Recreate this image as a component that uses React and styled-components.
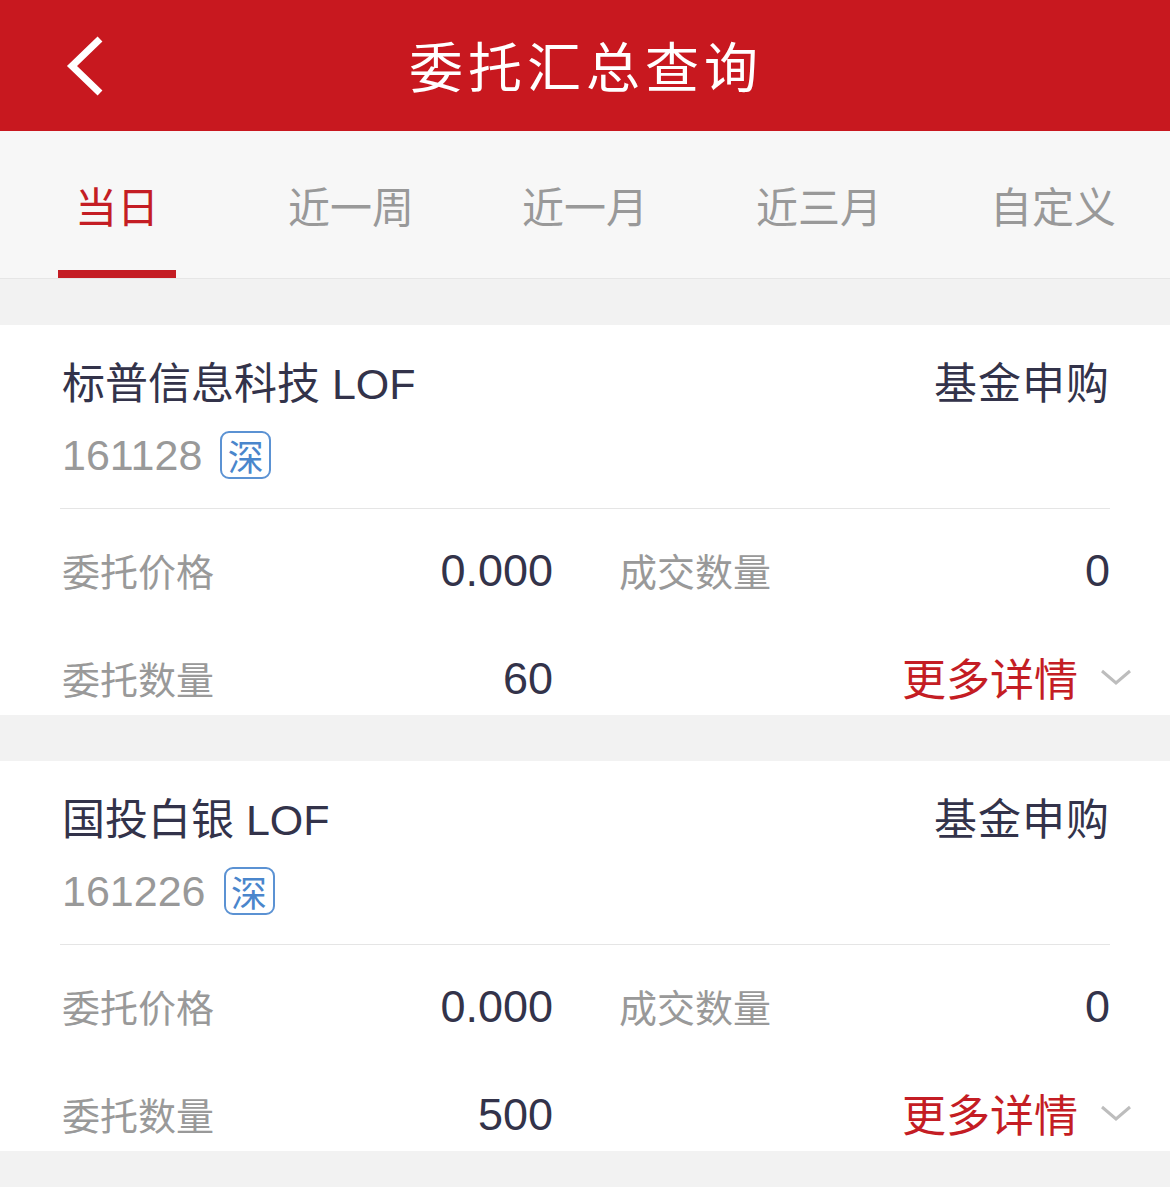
import React from 'react'
import styled, { createGlobalStyle } from 'styled-components'

const GlobalStyle = createGlobalStyle`
  html, body {
    margin: 0;
    padding: 0;
    background: #f2f2f2;
    font-family: "Liberation Sans", "Noto Sans CJK SC", sans-serif;
  }
`

const Page = styled.div`
  width: 1170px;
  min-height: 1187px;
  background: #f2f2f2;
`

const Header = styled.div`
  height: 131px;
  background: #c8181f;
  display: flex;
  align-items: center;
  justify-content: center;
  position: relative;
`

const Back = styled.div`
  position: absolute;
  left: 62px;
  top: 34px;
  width: 48px;
  height: 64px;
`

const HeaderTitle = styled.div`
  color: #fff;
  font-size: 54px;
  letter-spacing: 5px;
  font-family: "Noto Sans CJK SC", sans-serif;
  margin-left: 2px;
  margin-top: -2px;
`

const Tabs = styled.div`
  height: 147px;
  background: #f7f7f7;
  border-bottom: 1px solid #e6e6e6;
  display: grid;
  grid-template-columns: repeat(5, 1fr);
`

const Tab = styled.div`
  position: relative;
  display: flex;
  align-items: center;
  justify-content: center;
  font-family: "Noto Sans CJK SC", sans-serif;
  font-size: 42px;
  color: ${p => (p.$active ? '#c41d24' : '#999')};

  &::after {
    content: '';
    display: ${p => (p.$active ? 'block' : 'none')};
    position: absolute;
    left: 58px;
    bottom: 0;
    width: 118px;
    height: 8px;
    background: #c41d24;
  }
`

const List = styled.div`
  padding-top: 46px;
  display: flex;
  flex-direction: column;
  gap: 46px;
`

const Card = styled.div`
  background: #fff;
  padding: 0 60px;
`

const Head = styled.div`
  padding: 26px 0 29px;
  border-bottom: 1px solid #e5e5e5;
`

const TitleRow = styled.div`
  height: 58px;
  display: flex;
  align-items: center;
  justify-content: space-between;
  color: #33334a;
  font-size: 43px;
`

const Name = styled.div`
  padding-left: 2px;
`

const Kind = styled.div`
  letter-spacing: 1px;
  font-size: 43px;
`

const CodeRow = styled.div`
  margin-top: 22px;
  height: 48px;
  display: flex;
  align-items: center;
  gap: 18px;
  padding-left: 2px;
  color: #999;
  font-size: 43px;
`

const Badge = styled.span`
  box-sizing: border-box;
  width: 51px;
  height: 48px;
  border: 2.5px solid #5b92d3;
  border-radius: 9px;
  color: #4a86cc;
  font-size: 36px;
  display: flex;
  align-items: center;
  justify-content: center;
  font-family: "Noto Sans CJK SC", sans-serif;
`

const Body = styled.div`
  padding: 24px 0 2px;
  display: grid;
  grid-template-columns: 1fr 1fr;
  column-gap: 64px;
  row-gap: 36px;
`

const Cell = styled.div`
  height: 72px;
  display: flex;
  align-items: center;
  justify-content: space-between;
  padding-left: 2px;
`

const Label = styled.span`
  color: #999;
  font-size: 38px;
  font-family: "Noto Sans CJK SC", sans-serif;
`

const Value = styled.span`
  color: #33334a;
  font-size: 45px;
  padding-top: 4px;
`

const More = styled.div`
  height: 72px;
  display: flex;
  align-items: center;
  justify-content: flex-end;
  gap: 22px;
  margin-right: -22px;
  color: #c41d24;
  font-size: 44px;
  font-family: "Noto Sans CJK SC", sans-serif;
`

const Chevron = () => (
  <svg width="32" height="18" viewBox="0 0 32 18">
    <polyline points="2,3 16,15 30,3" fill="none" stroke="#bdbdbd" strokeWidth="3" />
  </svg>
)

const orders = [
  { name: '标普信息科技', code: '161128', price: '0.000', deal: '0', qty: '60' },
  { name: '国投白银', code: '161226', price: '0.000', deal: '0', qty: '500' },
]

const tabs = ['当日', '近一周', '近一月', '近三月', '自定义']

export default function App() {
  return (
    <Page>
      <GlobalStyle />
      <Header>
        <Back>
          <svg width="48" height="64" viewBox="0 0 48 64">
            <polyline points="38,5 10,32 38,59" fill="none" stroke="#fff" strokeWidth="7" />
          </svg>
        </Back>
        <HeaderTitle>委托汇总查询</HeaderTitle>
      </Header>
      <Tabs>
        {tabs.map((t, i) => (
          <Tab key={t} $active={i === 0}>{t}</Tab>
        ))}
      </Tabs>
      <List>
        {orders.map(o => (
          <Card key={o.code}>
            <Head>
              <TitleRow>
                <Name>{o.name} LOF</Name>
                <Kind>基金申购</Kind>
              </TitleRow>
              <CodeRow>
                {o.code}
                <Badge>深</Badge>
              </CodeRow>
            </Head>
            <Body>
              <Cell>
                <Label>委托价格</Label>
                <Value>{o.price}</Value>
              </Cell>
              <Cell>
                <Label>成交数量</Label>
                <Value>{o.deal}</Value>
              </Cell>
              <Cell>
                <Label>委托数量</Label>
                <Value>{o.qty}</Value>
              </Cell>
              <More>
                更多详情
                <Chevron />
              </More>
            </Body>
          </Card>
        ))}
      </List>
    </Page>
  )
}
